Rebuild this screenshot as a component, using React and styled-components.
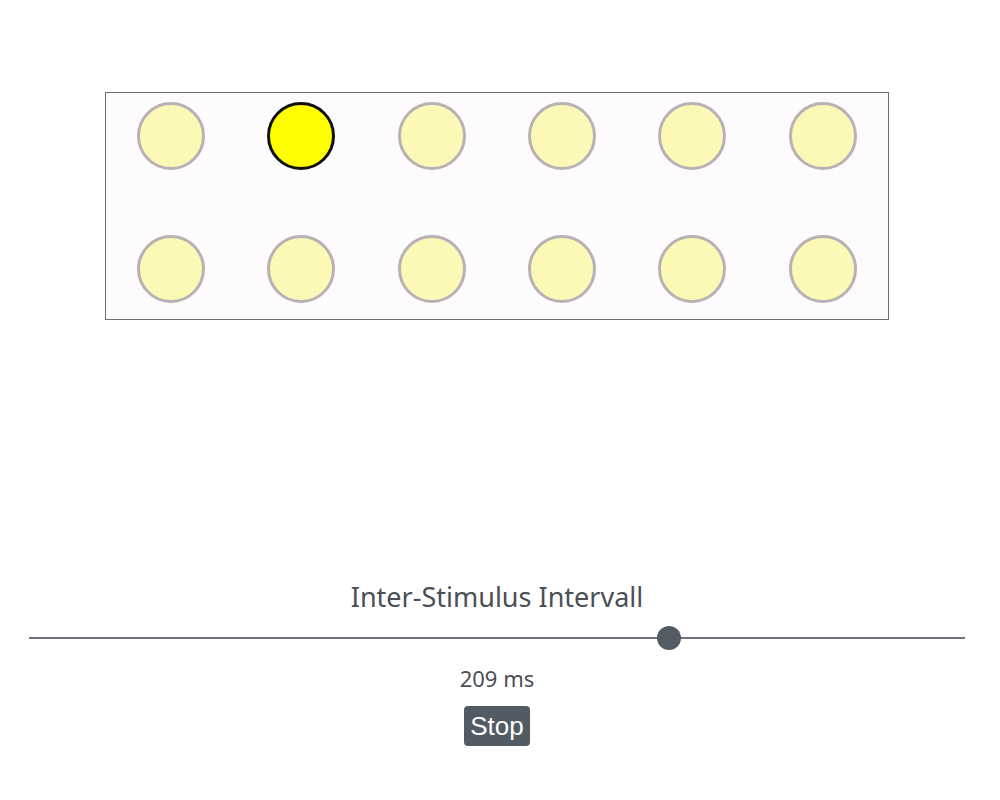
import { useState } from 'react';
import styled, { createGlobalStyle } from 'styled-components';

const GlobalStyle = createGlobalStyle`
  html, body {
    margin: 0;
    padding: 0;
    background: #ffffff;
  }
`;

const rows = [
  [0, 1, 0, 0, 0, 0],
  [0, 0, 0, 0, 0, 0],
];

const App = () => {
  const [interval] = useState(209);
  const min = 50;
  const max = 281;
  const pct = ((interval - min) / (max - min)) * 100;

  return (
    <Page>
      <GlobalStyle />
      <StimulusBox>
        {rows.flat().map((on, i) => (
          <Cell key={i}>
            <Dot active={on === 1} />
          </Cell>
        ))}
      </StimulusBox>

      <Controls>
        <Label>Inter-Stimulus Intervall</Label>
        <Track>
          <Thumb style={{ left: `calc(12px + (100% - 24px) * ${pct / 100})` }} />
        </Track>
        <Value>{interval} ms</Value>
        <StopButton>Stop</StopButton>
      </Controls>
    </Page>
  );
};

const Page = styled.div`
  width: 1000px;
  height: 800px;
  padding-top: 92px;
  box-sizing: border-box;
  font-family: "Noto Sans", "Open Sans", sans-serif;
`;

const StimulusBox = styled.div`
  width: 784px;
  height: 228px;
  margin-left: 105px;
  box-sizing: border-box;
  border: 1px solid #6f6f6f;
  background: #fdfbfe;
  display: grid;
  grid-template-columns: repeat(6, 1fr);
  grid-template-rows: repeat(2, 1fr);
  padding: 9px 0 16px;
  row-gap: 64px;
`;

const Cell = styled.div`
  display: flex;
  align-items: center;
  justify-content: center;
`;

const Dot = styled.div`
  width: 68px;
  height: 68px;
  box-sizing: border-box;
  border-radius: 50%;
  background: ${p => (p.active ? '#ffff00' : '#fcf9b6')};
  border: 3px solid ${p => (p.active ? '#111111' : '#b8b2b4')};
`;

const Controls = styled.div`
  width: 936px;
  margin: 259px 0 0 29px;
  display: flex;
  flex-direction: column;
  align-items: center;
`;

const Label = styled.div`
  font-size: 27px;
  line-height: 36px;
  color: #4a4f55;
`;

const Track = styled.div`
  position: relative;
  align-self: stretch;
  height: 2px;
  margin-top: 22px;
  background: #6c737a;
`;

const Thumb = styled.div`
  position: absolute;
  top: 50%;
  width: 24px;
  height: 24px;
  margin: -12px 0 0 -12px;
  border-radius: 50%;
  background: #535b63;
`;

const Value = styled.div`
  margin-top: 24px;
  font-size: 22px;
  line-height: 30px;
  color: #4a4f55;
`;

const StopButton = styled.button`
  margin-top: 13px;
  width: 66px;
  height: 40px;
  padding: 0;
  border: none;
  border-radius: 4px;
  background: #525a63;
  color: #ffffff;
  font-family: "Liberation Sans", Arial, sans-serif;
  font-size: 26px;
  cursor: pointer;
`;

export default App;
